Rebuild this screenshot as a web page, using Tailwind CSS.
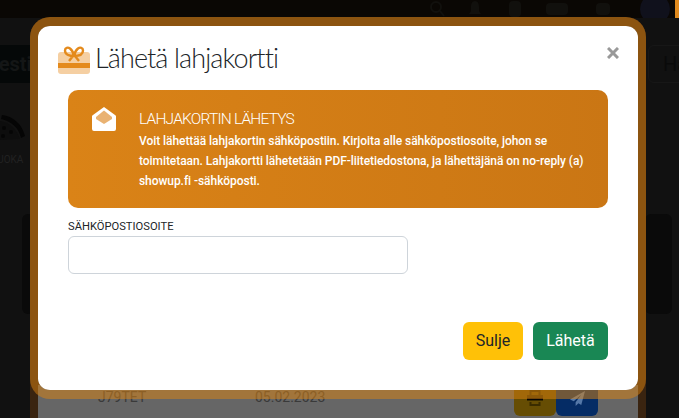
<!DOCTYPE html>
<html lang="en">
<head>
  <meta charset="UTF-8">
  <meta name="viewport" content="width=device-width, initial-scale=1.0">
  <title>Lähetä lahjakortti</title>
  <script src="https://cdn.jsdelivr.net/npm/@tailwindcss/browser@4"></script>
</head>
<body class="relative w-[679px] h-[418px] overflow-hidden bg-[#111111] font-['Roboto',sans-serif]">

  <!-- Dimmed page behind the modal -->
  <div class="flex flex-col h-full">
    <header class="flex items-center h-[18px] bg-[#0a0704] pl-[429px] overflow-hidden shrink-0">
      <svg class="w-4 h-4 shrink-0" viewBox="0 0 16 16" fill="none" stroke="#11100d" stroke-width="2"><circle cx="7" cy="6" r="5"/><path d="M11 10l4 5"/></svg>
      <svg class="w-4 h-4 ml-[22px] shrink-0" viewBox="0 0 16 16" fill="#11100d"><path d="M8 0c3 0 4 3 4 6v4l2 3H2l2-3V6c0-3 1-6 4-6z"/></svg>
      <div class="w-3 h-4 ml-[26px] bg-[#11100d] rounded-sm shrink-0"></div>
      <div class="w-[22px] h-3 ml-[25px] bg-[#11100d] rounded-sm shrink-0"></div>
      <div class="w-[14px] h-3 ml-[28px] bg-[#11100d] rounded-sm shrink-0"></div>
      <div class="w-[30px] h-[30px] ml-[30px] rounded-full bg-[#10111c] shrink-0"></div>
      <div class="w-1 h-[18px] ml-[5px] bg-[#e08a1e] shrink-0"></div>
    </header>

    <main class="flex justify-between flex-1 min-h-0">
      <div class="w-[30px] overflow-hidden">
        <div class="flex items-center h-[38px] mt-[27px] bg-[#050808]">
          <span class="text-xl font-bold text-[#141616] ml-[-12px]">Festi</span>
        </div>
        <svg class="w-[27px] h-[26px] mt-[31px] ml-[-1px]" viewBox="0 0 27 26">
          <path fill="#0d0d0d" d="M1 7c9 1 17 8 20 18L0 26z"/>
          <path fill="#050505" d="M3 1c11 1 20 9 23 21l-4 2C20 14 12 7 2 5z"/>
          <circle cx="5" cy="14" r="2" fill="#050505"/><circle cx="12" cy="18" r="2" fill="#050505"/><circle cx="4" cy="22" r="2" fill="#050505"/>
        </svg>
        <div class="text-[10px] leading-4 text-[#222] mt-[12px] ml-[-9px]">RUOKA</div>
        <div class="w-4 h-[100px] ml-[22px] mt-[46px] bg-[#0a0a0a] rounded-md"></div>
      </div>
      <div class="w-[34px] overflow-hidden">
        <div class="flex items-center h-[38px] mt-[27px] ml-[3px] w-10 pl-[14px] border border-[#171717] rounded-md">
          <span class="text-[20px] text-[#0a0a0a]">Ha</span>
        </div>
        <div class="w-[27px] h-[100px] mt-[131px] bg-[#0a0a0a] rounded-md"></div>
      </div>
    </main>

    <div class="flex h-[33px] shrink-0">
      <div class="w-[30px]"></div>
      <div class="w-2 bg-[#3a2410]"></div>
      <div class="flex w-[600px] bg-[#666666] pl-[60px] pt-1 text-sm leading-4 text-[#3a3a3a]">
        <span class="w-[157px]">J79TET</span>
        <span class="w-[259px]">05.02.2023</span>
        <div class="flex items-center justify-center w-[42px] h-[31px] -mt-1 bg-[#664d03] rounded-b-md">
          <svg class="w-4 h-4 mb-[5px]" viewBox="0 0 16 16"><path fill="none" stroke="#3a2c00" stroke-width="2" d="M3.500 5V1h9v4M3.500 12v3h9v-3"/><path fill="#3a2c00" d="M0 5h16v6H0z"/><path fill="#050505" d="M0 8h16v2H0z"/></svg>
        </div>
        <div class="flex items-center justify-center w-[42px] h-[31px] -mt-1 bg-[#052c65] rounded-b-md">
          <svg class="w-[15px] h-[15px] mb-[5px]" viewBox="0 0 16 16" fill="#5578a8"><path d="M16 0L0 9l4 2 8-7-6 8v4l3-3 3 2z"/></svg>
        </div>
      </div>
      <div class="w-2 bg-[#3a2410]"></div>
    </div>
  </div>

  <!-- Tint behind the modal's see-through border -->
  <div class="absolute left-[30px] top-[17px] w-[616px] h-[368px] bg-[#3a2410] rounded-t-[20px]"></div>

  <!-- Modal -->
  <div class="absolute left-[30px] top-[17px] flex flex-col w-[616px] h-[382px] border-x-8 border-y-[9px] border-[#de8410]/50 bg-white bg-clip-padding rounded-[20px]">
    <div class="flex items-center h-[64px] pl-5 pr-[19px]">
      <svg class="w-8 h-7 shrink-0 mt-[3px]" viewBox="0 0 32 28">
        <path fill="#f5cfa2" d="M3 6h26a3 3 0 0 1 3 3v16a3 3 0 0 1-3 3H3a3 3 0 0 1-3-3V9a3 3 0 0 1 3-3z"/>
        <path fill="#e48a1c" d="M0 17h32v5H0z"/>
        <path fill="none" stroke="#e48a1c" stroke-width="2.4" d="M16 10C12 10 7 9 7 4.500C7 1.500 10 1 12 2.500C14.500 4.500 15.500 7 16 10C16.500 7 17.500 4.500 20 2.500C22 1 25 1.500 25 4.500C25 9 20 10 16 10M15 10l-4 5M17 10l4 5"/>
      </svg>
      <h1 class="ml-[5px] font-['Lato',sans-serif] font-light text-[27px] leading-8 text-[#212529] tracking-[-0.9px]">Lähetä lahjakortti</h1>
      <svg class="w-3 h-3 ml-auto mb-[10px]" viewBox="0 0 12 12" fill="none" stroke="#999" stroke-width="3"><path d="M1 1l10 10M11 1L1 11"/></svg>
    </div>

    <div class="mx-[30px] flex h-[118px] rounded-[10px] bg-gradient-to-r from-[#da8317] to-[#ca7614] text-white">
      <svg class="w-6 h-6 ml-6 mt-[17px] shrink-0" viewBox="0 0 24 24">
        <path fill="#fff" d="M12 0l11 8a2 2 0 0 1 1 2v12a2 2 0 0 1-2 2H2a2 2 0 0 1-2-2V10a2 2 0 0 1 1-2z"/>
        <path fill="#e9b272" d="M12 3.500l8 6.500v2l-8 5-8-5v-2z"/>
      </svg>
      <div class="ml-[23px] pt-[19px]">
        <h2 class="font-light text-[15.5px] leading-[21px] tracking-[-0.8px]">LAHJAKORTIN LÄHETYS</h2>
        <p class="mt-px text-[12px] leading-5 font-medium tracking-[-0.06px] w-[450px]">Voit lähettää lahjakortin sähköpostiin. Kirjoita alle sähköpostiosoite, johon se toimitetaan. Lahjakortti lähetetään PDF-liitetiedostona, ja lähettäjänä on no-reply (a) showup.fi -sähköposti.</p>
      </div>
    </div>

    <form class="mx-[30px] mt-[11px] flex flex-col flex-1">
      <label for="email" class="text-[11.2px] leading-4 text-[#212529]">SÄHKÖPOSTIOSOITE</label>
      <input id="email" type="text" class="w-[340px] h-[38px] mt-px border border-[#ced4da] rounded-md bg-white">
      <div class="flex justify-end gap-[10px] mt-[48px]">
        <button type="button" class="w-[60px] h-[38px] rounded-md bg-[#ffc107] text-[#212529] text-base">Sulje</button>
        <button type="button" class="w-[75px] h-[38px] rounded-md bg-[#198754] text-white text-base">Lähetä</button>
      </div>
    </form>
  </div>

</body>
</html>
